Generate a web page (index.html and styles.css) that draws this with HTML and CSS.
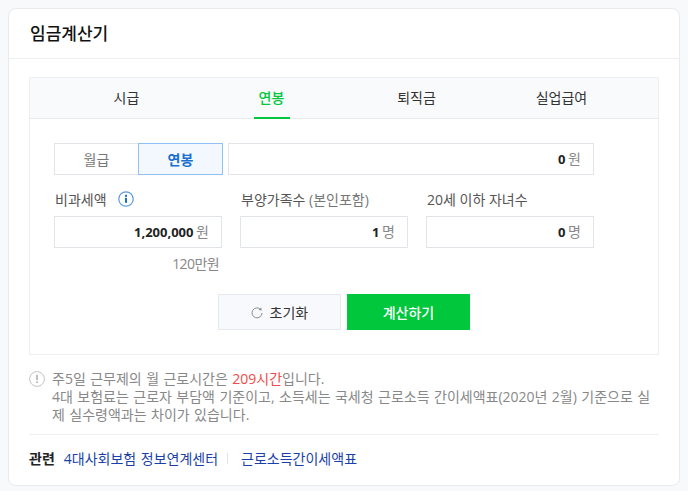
FILE: index.html
```html
<!DOCTYPE html>
<html lang="ko">
<head>
  <meta charset="UTF-8" />
  <title>임금계산기</title>
  <link rel="stylesheet" href="styles.css">
</head>
<body>
  <div class="card">
    <h1 class="card-title">임금계산기</h1>
    <div class="card-body">
      <div class="calc">
        <div class="tabs">
          <div class="tab">시급</div>
          <div class="tab active">연봉</div>
          <div class="tab">퇴직금</div>
          <div class="tab">실업급여</div>
        </div>
        <div class="calc-form">
          <div class="pay-row">
            <div class="toggle">
              <button class="toggle-btn">월급</button>
              <button class="toggle-btn on">연봉</button>
            </div>
            <div class="field pay-field"><b>0</b> 원</div>
          </div>
          <div class="field-row">
            <div class="field-group">
              <div class="field-label">
                <span>비과세액</span>
                <svg class="info-icon" width="16" height="16" viewBox="0 0 16 16">
                  <circle cx="8" cy="8" r="7.2" fill="none" stroke="#5b9bdc" stroke-width="1.2"/>
                  <rect x="7" y="6.8" width="2" height="5" fill="#1a6fc4"/>
                  <rect x="7" y="3.8" width="2" height="2" fill="#1a6fc4"/>
                </svg>
              </div>
              <div class="field"><b>1,200,000</b> 원</div>
              <div class="field-hint">120만원</div>
            </div>
            <div class="field-group">
              <div class="field-label"><span>부양가족수 <span class="sub">(본인포함)</span></span></div>
              <div class="field"><b>1</b> 명</div>
            </div>
            <div class="field-group">
              <div class="field-label"><span>20세 이하 자녀수</span></div>
              <div class="field"><b>0</b> 명</div>
            </div>
          </div>
          <div class="actions">
            <button class="btn btn-reset">
              <svg width="12" height="12" viewBox="0 0 12 12">
                <path d="M9.6 2.4A5 5 0 1 0 11 6" fill="none" stroke="#8c8c8c" stroke-width="1"/>
                <path d="M7.6 2.9L10.6 3.4L10.4 0.4Z" fill="#8c8c8c"/>
              </svg>
              초기화
            </button>
            <button class="btn btn-submit">계산하기</button>
          </div>
        </div>
      </div>

      <div class="notes">
        <svg class="notes-icon" width="16" height="16" viewBox="0 0 16 16">
          <circle cx="8" cy="8" r="7.4" fill="none" stroke="#c4c4c4" stroke-width="1"/>
          <rect x="7.2" y="3.8" width="1.6" height="5.4" fill="#b0b0b0"/>
          <rect x="7.2" y="10.4" width="1.6" height="1.7" fill="#b0b0b0"/>
        </svg>
        <p>주5일 근무제의 월 근로시간은 <em>209시간</em>입니다.<br>4대 보험료는 근로자 부담액 기준이고, 소득세는 국세청 근로소득 간이세액표(2020년 2월) 기준으로 실제 실수령액과는 차이가 있습니다.</p>
      </div>

      <div class="related">
        <strong>관련</strong>
        <a href="#">4대사회보험 정보연계센터</a>
        <span class="sep"></span>
        <a href="#">근로소득간이세액표</a>
      </div>
    </div>
  </div>
</body>
</html>
```

FILE: styles.css
```css
* {
  box-sizing: border-box;
}

body {
  margin: 0;
  padding: 8px 8px 0;
  background: #f8f9fb;
  color: #333;
  font-family: "Open Sans", "Noto Sans CJK KR", sans-serif;
  font-size: 13px;
}

.card {
  width: 672px;
  height: 478px;
  background: #fff;
  border: 1px solid #e8eaee;
  border-radius: 8px;
}

.card-title {
  margin: 0;
  height: 50px;
  padding-left: 21px;
  border-bottom: 1px solid #eeeff2;
  color: #111;
  font-size: 17px;
  font-weight: 500;
  line-height: 50px;
}

.card-body {
  padding: 18px 20px 0;
}

.calc {
  height: 278px;
  border: 1px solid #eceef1;
}

.tabs {
  display: flex;
  height: 41px;
  padding-left: 24px;
  background: #f9fafc;
  border-bottom: 1px solid #e9ecef;
}

.tab {
  width: 145px;
  color: #333;
  text-align: center;
  font-size: 14px;
  line-height: 40px;
}

.tab.active {
  position: relative;
  color: #00c73c;
  font-weight: 500;
}

.tab.active::after {
  content: "";
  position: absolute;
  left: 50%;
  bottom: -1px;
  width: 36px;
  height: 2px;
  margin-left: -18px;
  background: #00c73c;
}

.calc-form {
  padding: 24px 64px 0 24px;
}

.pay-row {
  display: flex;
  gap: 5px;
}

.toggle {
  display: flex;
}

.toggle-btn {
  width: 85px;
  height: 32px;
  padding: 0;
  background: #fff;
  border: 1px solid #e1e4e9;
  color: #777;
  font: inherit;
  font-size: 14px;
}

.toggle-btn.on {
  margin-left: -1px;
  background: #f3f8fe;
  border-color: #8fc1f5;
  color: #1a6fd0;
  font-weight: 700;
}

.field {
  height: 32px;
  padding-right: 12px;
  border: 1px solid #e1e4e9;
  color: #888;
  text-align: right;
  font-size: 14px;
  word-spacing: -1px;
  line-height: 30px;
}

.field b {
  color: #222;
  font-size: 13px;
  font-weight: 700;
}

.pay-field {
  flex: 1;
}

.field-row {
  display: flex;
  gap: 18px;
  margin-top: 13px;
}

.field-group {
  width: 168px;
}

.field-label {
  display: flex;
  align-items: center;
  height: 28px;
  padding: 0 0 6px 1px;
  color: #555;
  font-size: 14px;
}

.field-label .sub {
  color: #777;
}

.info-icon {
  margin-left: 11px;
}

.field-hint {
  margin-top: 6px;
  padding-right: 3px;
  color: #888;
  text-align: right;
  font-size: 14px;
  letter-spacing: -0.6px;
  line-height: 20px;
}

.actions {
  display: flex;
  justify-content: center;
  gap: 6px;
  margin-top: 20px;
  margin-right: -40px;
}

.btn {
  width: 123px;
  height: 36px;
  padding: 0;
  border: 1px solid #e6e8ef;
  font: inherit;
  font-size: 14px;
}

.btn-reset {
  background: #f8f9fc;
  color: #333;
}

.btn-reset svg {
  margin-right: 3px;
  vertical-align: -1px;
}

.btn-submit {
  background: #00c73c;
  border-color: #00c73c;
  color: #fff;
  font-weight: 500;
}

.notes {
  display: flex;
  gap: 7px;
  padding-top: 15px;
  padding-bottom: 10px;
  border-bottom: 1px solid #eeeff2;
}

.notes-icon {
  flex: none;
  margin-top: 1px;
}

.notes p {
  margin: 0;
  color: #888;
  font-size: 14px;
  word-spacing: 0.8px;
  line-height: 18px;
  word-break: break-all;
}

.notes em {
  color: #f04b4b;
  font-style: normal;
}

.related {
  display: flex;
  align-items: center;
  height: 46px;
  color: #222;
  font-size: 14px;
  word-spacing: 1px;
}

.related strong {
  font-weight: 700;
  margin-right: 9px;
}

.related a {
  color: #1a3fa8;
  text-decoration: none;
}

.sep {
  width: 1px;
  height: 11px;
  margin: 0 13px 0 9px;
  background: #e3e3e3;
}
```
